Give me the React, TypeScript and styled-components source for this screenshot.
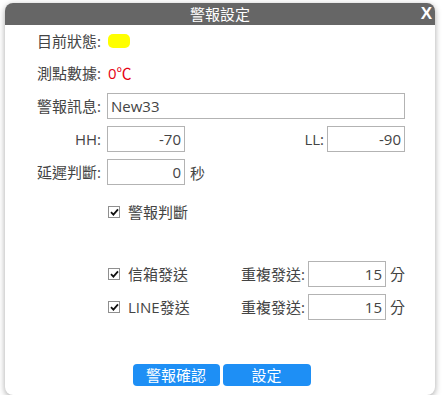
import styled, { createGlobalStyle } from "styled-components";

const GlobalStyle = createGlobalStyle`
  html, body {
    margin: 0;
    padding: 0;
    background: #ffffff;
  }
  body {
    font-family: "Open Sans", "Noto Sans CJK TC", sans-serif;
    font-size: 15px;
    color: #444;
  }
`;

const Dialog = styled.div`
  margin: 3px 0 0 5px;
  width: 430px;
  background: #fff;
  border-radius: 8px;
  box-shadow: 0 2px 6px rgba(0, 0, 0, 0.35);
  overflow: hidden;
`;

const TitleBar = styled.div`
  height: 22px;
  background: #666666;
  display: grid;
  grid-template-columns: 1fr auto 1fr;
  align-items: center;
  color: #fff;
  line-height: 22px;
`;

const Title = styled.div`
  font-size: 15px;
`;

const Close = styled.div`
  justify-self: end;
  margin-right: 3px;
  font-family: "Liberation Sans", Arial, sans-serif;
  font-weight: bold;
  font-size: 17px;
`;

const Body = styled.div`
  padding: 0 30px 9px 0;
  display: flex;
  flex-direction: column;
`;

const Row = styled.div<{ $mt?: number; $h?: number }>`
  display: grid;
  grid-template-columns: 96px 1fr;
  column-gap: 6px;
  align-items: center;
  margin-top: ${({ $mt }) => $mt ?? 0}px;
  height: ${({ $h }) => $h ?? 26}px;
`;

const LimitRow = styled(Row)`
  grid-template-columns: 96px 78px 1fr 78px;
`;

const Label = styled.label`
  justify-self: end;
  white-space: nowrap;
  line-height: 20px;
`;

const SideLabel = styled(Label)`
  margin-right: -3px;
`;

const Swatch = styled.span<{ $color: string }>`
  display: block;
  margin-left: 1px;
  width: 22px;
  height: 14px;
  border-radius: 5px;
  background: ${({ $color }) => $color};
`;

const Reading = styled.span`
  margin-left: 1px;
  color: #e60012;
  line-height: 20px;
`;

const Field = styled.input<{ $w?: number; $align?: string }>`
  box-sizing: border-box;
  width: ${({ $w }) => ($w ? `${$w}px` : "100%")};
  height: 26px;
  border: 1px solid #b3b3b3;
  padding: 0 3px;
  font: inherit;
  font-size: 15px;
  color: #444;
  text-align: ${({ $align }) => $align ?? "left"};
  outline: none;
  background: #fff;
`;

const Inline = styled.div`
  display: flex;
  align-items: center;
  gap: 5px;
`;

const Check = styled.span`
  box-sizing: border-box;
  width: 12px;
  height: 12px;
  border: 1px solid #8f8f8f;
  display: flex;
  align-items: center;
  justify-content: center;
  background: #fff;
`;

const CheckItem = styled.label`
  display: flex;
  align-items: center;
  gap: 8px;
  margin-left: 1px;
  line-height: 20px;
`;

const SendGrid = styled.div`
  display: grid;
  grid-template-columns: 1fr auto 78px 16px;
  column-gap: 3px;
  align-items: center;
`;

const Unit = styled.span`
  margin-left: 1px;
  line-height: 20px;
`;

const Footer = styled.div`
  margin-top: 44px;
  display: flex;
  justify-content: center;
  gap: 3px;
  margin-right: -33px;
`;

const Button = styled.button<{ $w: number }>`
  width: ${({ $w }) => $w}px;
  height: 22px;
  border: none;
  border-radius: 4px;
  background: #1e8ff5;
  color: #fff;
  font: inherit;
  font-size: 15px;
  line-height: 22px;
  padding: 0;
`;

const CheckBox = ({ text }: { text: string }) => (
  <CheckItem>
    <Check>
      <svg width="9" height="8" viewBox="0 0 9 8">
        <path d="M1 4.2 L3.4 6.6 L8 1.4" fill="none" stroke="#111" strokeWidth="1.8" />
      </svg>
    </Check>
    {text}
  </CheckItem>
);

const SendRow = ({ text, mt }: { text: string; mt: number }) => (
  <Row $mt={mt}>
    <span />
    <SendGrid>
      <CheckBox text={text} />
      <Label>重複發送:</Label>
      <Field $w={78} $align="right" defaultValue="15" />
      <Unit>分</Unit>
    </SendGrid>
  </Row>
);

export default function App() {
  return (
    <>
      <GlobalStyle />
      <Dialog>
        <TitleBar>
          <span />
          <Title>警報設定</Title>
          <Close>X</Close>
        </TitleBar>
        <Body>
          <Row $h={32}>
            <Label>目前狀態:</Label>
            <Swatch $color="#ffff00" />
          </Row>
          <Row $h={32}>
            <Label>測點數據:</Label>
            <Reading>0℃</Reading>
          </Row>
          <Row $mt={4}>
            <Label>警報訊息:</Label>
            <Field defaultValue="New33" />
          </Row>
          <LimitRow $mt={7}>
            <Label>HH:</Label>
            <Field $w={78} $align="right" defaultValue="-70" />
            <SideLabel>LL:</SideLabel>
            <Field $w={78} $align="right" defaultValue="-90" />
          </LimitRow>
          <Row $mt={7}>
            <Label>延遲判斷:</Label>
            <Inline>
              <Field $w={78} $align="right" defaultValue="0" />
              <span>秒</span>
            </Inline>
          </Row>
          <Row $mt={15} $h={24}>
            <span />
            <CheckBox text="警報判斷" />
          </Row>
          <SendRow text="信箱發送" mt={37} />
          <SendRow text="LINE發送" mt={7} />
          <Footer>
            <Button $w={87}>警報確認</Button>
            <Button $w={88}>設定</Button>
          </Footer>
        </Body>
      </Dialog>
    </>
  );
}
